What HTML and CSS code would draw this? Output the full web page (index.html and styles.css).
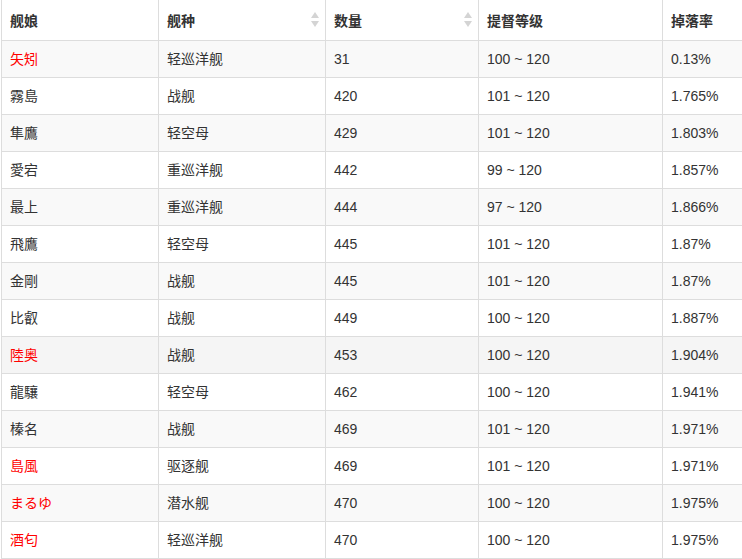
FILE: index.html
```html
<!DOCTYPE html>
<html lang="zh">
<head>
<meta charset="utf-8">
<title>掉落率</title>
<link rel="stylesheet" href="styles.css">
</head>
<body>
<div class="wrap">
<table class="drops">
  <colgroup>
    <col class="c1"><col class="c2"><col class="c3"><col class="c4"><col class="c5">
  </colgroup>
  <thead>
    <tr>
      <th>舰娘</th>
      <th class="sortable">舰种<svg class="sort" width="8" height="15" viewBox="0 0 8 15"><path d="M4 0 L8 6 L0 6 Z" fill="#d4d4d4"/><path d="M4 15 L8 9 L0 9 Z" fill="#d4d4d4"/></svg></th>
      <th class="sortable">数量<svg class="sort" width="8" height="15" viewBox="0 0 8 15"><path d="M4 0 L8 6 L0 6 Z" fill="#d4d4d4"/><path d="M4 15 L8 9 L0 9 Z" fill="#d4d4d4"/></svg></th>
      <th>提督等级</th>
      <th>掉落率</th>
    </tr>
  </thead>
  <tbody>
    <tr><td class="red">矢矧</td><td>轻巡洋舰</td><td>31</td><td>100 ~ 120</td><td>0.13%</td></tr>
    <tr><td>霧島</td><td>战舰</td><td>420</td><td>101 ~ 120</td><td>1.765%</td></tr>
    <tr><td>隼鷹</td><td>轻空母</td><td>429</td><td>101 ~ 120</td><td>1.803%</td></tr>
    <tr><td>愛宕</td><td>重巡洋舰</td><td>442</td><td>99 ~ 120</td><td>1.857%</td></tr>
    <tr><td>最上</td><td>重巡洋舰</td><td>444</td><td>97 ~ 120</td><td>1.866%</td></tr>
    <tr><td>飛鷹</td><td>轻空母</td><td>445</td><td>101 ~ 120</td><td>1.87%</td></tr>
    <tr><td>金剛</td><td>战舰</td><td>445</td><td>101 ~ 120</td><td>1.87%</td></tr>
    <tr><td>比叡</td><td>战舰</td><td>449</td><td>100 ~ 120</td><td>1.887%</td></tr>
    <tr class="hover"><td class="red">陸奥</td><td>战舰</td><td>453</td><td>100 ~ 120</td><td>1.904%</td></tr>
    <tr><td>龍驤</td><td>轻空母</td><td>462</td><td>100 ~ 120</td><td>1.941%</td></tr>
    <tr><td>榛名</td><td>战舰</td><td>469</td><td>101 ~ 120</td><td>1.971%</td></tr>
    <tr><td class="red">島風</td><td>驱逐舰</td><td>469</td><td>101 ~ 120</td><td>1.971%</td></tr>
    <tr><td class="red">まるゆ</td><td>潜水舰</td><td>470</td><td>100 ~ 120</td><td>1.975%</td></tr>
    <tr><td class="red">酒匂</td><td>轻巡洋舰</td><td>470</td><td>100 ~ 120</td><td>1.975%</td></tr>
  </tbody>
</table>
</div>
</body>
</html>
```
FILE: styles.css
```css
html, body {
  margin: 0;
  padding: 0;
  background: #fff;
  overflow: hidden;
}
.wrap {
  width: 742px;
  padding-left: 1px;
  box-sizing: border-box;
  overflow: hidden;
}
.drops {
  border-collapse: collapse;
  table-layout: fixed;
  width: 741px;
  font-family: "Liberation Sans", "Noto Sans CJK SC", sans-serif;
  font-size: 14px;
  line-height: 20px;
  color: #333;
}
.c1 { width: 157px; }
.c2 { width: 167px; }
.c3 { width: 153px; }
.c4 { width: 184px; }
.c5 { width: 80px; }
.drops th,
.drops td {
  border: 1px solid #ddd;
  padding: 8px;
  text-align: left;
  vertical-align: middle;
  white-space: nowrap;
}
.drops th:last-child,
.drops td:last-child {
  border-right: none;
}
.drops th {
  border-top: none;
  height: 23px;
  padding-top: 9px;
  padding-bottom: 8px;
  font-weight: bold;
}
.drops th.sortable {
  position: relative;
}
.sort {
  position: absolute;
  right: 6px;
  top: 12px;
}
.drops tbody tr:nth-child(odd) {
  background: #f9f9f9;
}
.drops tbody tr.hover {
  background: #f5f5f5;
}
.red {
  color: #f00;
}
```
